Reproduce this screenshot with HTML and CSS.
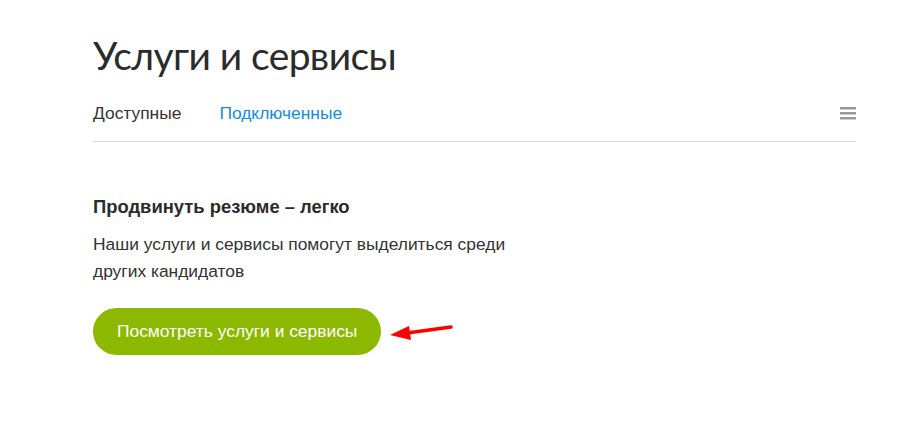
FILE: index.html
```html
<!DOCTYPE html>
<html lang="ru">
<head>
  <meta charset="UTF-8">
  <title>Услуги и сервисы</title>
  <link rel="stylesheet" href="styles.css">
</head>
<body>
  <div class="page">
    <h1 class="title">Услуги и сервисы</h1>

    <div class="tabs">
      <span class="tab">Доступные</span>
      <a class="tab tab-link" href="#">Подключенные</a>
      <span class="menu-icon">
        <svg width="16" height="13" viewBox="0 0 16 13">
          <rect x="0" y="0" width="16" height="2.5" fill="#999"/>
          <rect x="0" y="5" width="16" height="2.5" fill="#999"/>
          <rect x="0" y="10" width="16" height="2.5" fill="#999"/>
        </svg>
      </span>
    </div>

    <div class="promo">
      <h2 class="promo-title">Продвинуть резюме – легко</h2>
      <p class="promo-text">Наши услуги и сервисы помогут выделиться среди<br>других кандидатов</p>
      <div class="promo-action">
        <button class="btn">Посмотреть услуги и сервисы</button>
        <svg class="arrow" width="64" height="20" viewBox="0 0 64 20">
          <path d="M62 4 L18 10" stroke="#f00" stroke-width="3.5" stroke-linecap="round"/>
          <path d="M1 12 L20 3 L22 17 Z" fill="#f00"/>
        </svg>
      </div>
    </div>
  </div>
</body>
</html>
```

FILE: styles.css
```css
body {
  margin: 0;
  background: #fff;
  font-family: "Liberation Sans", Arial, sans-serif;
  color: #333;
}
.page {
  width: 763px;
  padding: 29px 0 0 93px;
}
.title {
  margin: 0 0 5px;
  font-family: Lato, sans-serif;
  font-weight: 400;
  font-size: 39px;
  line-height: 52px;
  letter-spacing: -0.6px;
  color: #2b2b2b;
}
.tabs {
  display: flex;
  align-items: center;
  height: 55px;
  border-bottom: 1px solid #d6dadc;
  font-size: 17.4px;
}
.tab {
  color: #333;
  margin-right: 38px;
  text-decoration: none;
}
.tab-link { color: #0f8ce6; }
.menu-icon {
  margin-left: auto;
  display: flex;
}
.promo { padding-top: 53px; }
.promo-title {
  margin: 0;
  font-size: 18.4px;
  font-weight: bold;
  line-height: 24px;
  color: #2b2b2b;
}
.promo-text {
  margin: 12px 0 0;
  font-size: 17.4px;
  line-height: 27px;
}
.promo-action {
  display: flex;
  align-items: center;
  margin-top: 23px;
}
.btn {
  height: 47px;
  padding: 0 24px;
  border: none;
  border-radius: 24px;
  background: #8cb800;
  color: #fff;
  font-family: "Liberation Sans", Arial, sans-serif;
  font-size: 17.4px;
  cursor: pointer;
}
.arrow {
  margin-left: 8px;
  margin-top: 3px;
}
```
